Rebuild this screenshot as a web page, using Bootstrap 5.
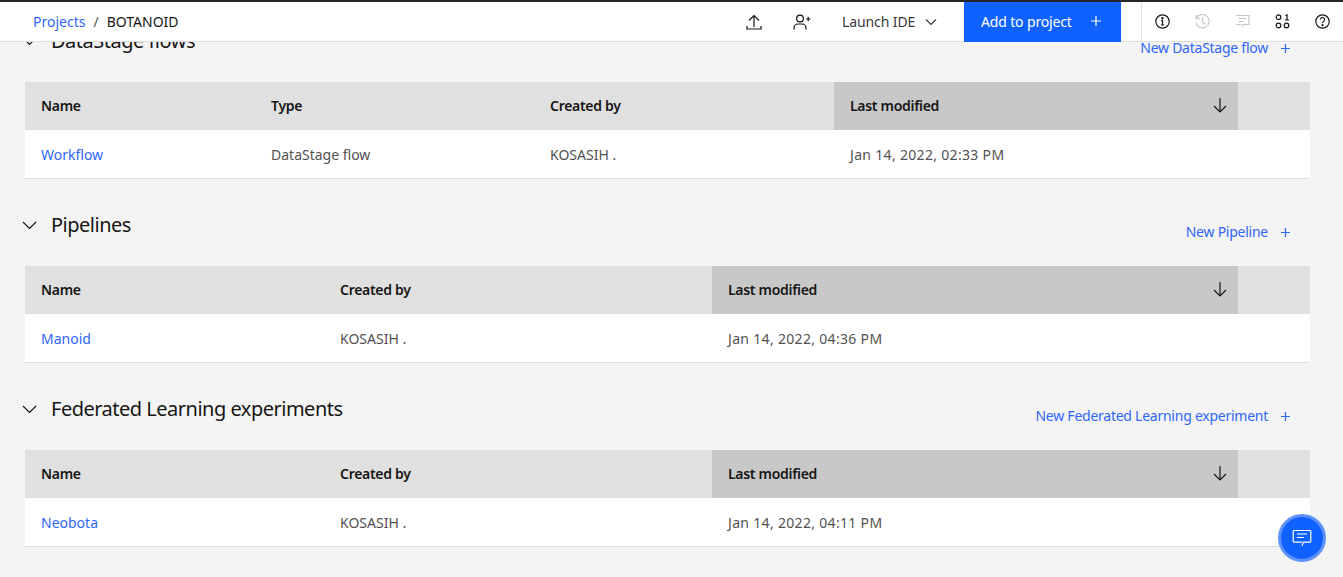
<!DOCTYPE html>
<html lang="en">
<head>
  <meta charset="UTF-8">
  <meta name="viewport" content="width=device-width, initial-scale=1">
  <title>BOTANOID</title>
  <link href="https://cdn.jsdelivr.net/npm/bootstrap@5.3.0/dist/css/bootstrap.min.css" rel="stylesheet">
  <style>
    html, body { height: 100%; overflow: hidden; }
    body { background: #f4f4f4; color: #161616; font-family: "Noto Sans", "Liberation Sans", sans-serif; font-size: 14px; }
    a { color: #2f66fb; text-decoration: none; }
    svg { display: block; fill: none; stroke: currentColor; stroke-width: 1.2; }

    .top-bar { height: 42px; background: #fff; border-top: 2px solid #262626; border-bottom: 1px solid #e0e0e0; }
    .crumbs { padding-left: 33px; line-height: 39px; }
    .crumbs .sep { margin: 0 8px; color: #525252; }
    .icon-btn { width: 48px; height: 39px; color: #161616; }
    .ide-btn { width: 130px; height: 39px; margin-left: 2px; color: #393939; gap: 10px; padding-left: 14px; letter-spacing: -.1px; }
    .add-btn { width: 157px; height: 40px; margin: 1px 0 0 6px; padding: 0 20px 2px 17px; background: #0f62fe; color: #fff; font-size: 14px; letter-spacing: -.15px; border: 0; border-radius: 0; }
    .side-icons { width: 202px; height: 39px; margin-left: 20px; border-left: 1px solid #e0e0e0; }
    .side-btn { width: 40px; height: 39px; color: #161616; }
    .side-btn.off { color: #c6c6c6; }

    .page-body { padding: 25px 33px 0 25px; }
    .sect { margin-bottom: 30.5px; }
    .sect-head { height: 32px; margin-bottom: 25px; }
    .sect-title { margin: 0 0 0 14px; font-size: 20px; font-weight: 400; line-height: 32px; letter-spacing: -.5px; color: #161616; }
    .toggle { margin-left: -3px; width: 15px; color: #161616; }
    .new-link { margin: 13px 20px 0 0; line-height: 20px; gap: 13px; letter-spacing: -.25px; }

    .data-tbl { table-layout: fixed; margin: 0; width: 1285px; }
    .data-tbl th, .data-tbl td { padding: 0 16px; vertical-align: middle; font-size: 14px; }
    .data-tbl th { height: 48px; padding-bottom: 2px; background: #e0e0e0; color: #161616; font-weight: 600; letter-spacing: -.3px; border: 0; }
    .data-tbl td { height: 48px; padding-top: 2px; background: #fff; color: #525252; border-bottom: 1px solid #e0e0e0; }
    .data-tbl th.sorted { background: #c8c8c8; }
    .data-tbl td.when { letter-spacing: .32px; }
    .data-tbl .sort-arrow { color: #161616; margin-right: -5px; }
    .w-name3 { width: 230px; } .w-type { width: 279px; } .w-by3 { width: 300px; }
    .w-name2 { width: 299px; } .w-by2 { width: 388px; }
    .w-mod3 { width: 404px; } .w-mod2 { width: 526px; } .w-end { width: 72px; }

    .chat-fab { position: fixed; right: 17px; bottom: 15px; width: 48px; height: 48px; border-radius: 50%; background: #0f62fe; border: 3px solid #6092fb; color: #fff; }
  </style>
</head>
<body>
  <header class="top-bar fixed-top d-flex align-items-center">
    <nav class="crumbs me-auto"><a href="#">Projects</a><span class="sep">/</span><span>BOTANOID</span></nav>
    <div class="icon-btn d-flex align-items-center justify-content-center">
      <svg width="16" height="16" viewBox="0 0 16 16"><path d="M8 13V1.500M3 6.500l5-5 5 5M1 12v3h14v-3"/></svg>
    </div>
    <div class="icon-btn d-flex align-items-center justify-content-center">
      <svg width="18" height="16" viewBox="0 0 18 16"><circle cx="7" cy="4.500" r="3.400"/><path d="M1 15.500v-1.500a4 4 0 0 1 4-4h4a4 4 0 0 1 4 4v1.500M13 5h4.500M15.200 2.700v4.600"/></svg>
    </div>
    <div class="ide-btn d-flex align-items-center">
      <span>Launch IDE</span>
      <svg width="12" height="8" viewBox="0 0 12 8"><path d="M1 1.500l5 5 5-5"/></svg>
    </div>
    <button class="add-btn btn d-flex align-items-center justify-content-between">
      <span>Add to project</span>
      <svg width="10" height="10" viewBox="0 0 10 10"><path d="M5 0v10M0 5h10"/></svg>
    </button>
    <div class="side-icons d-flex align-items-center">
      <div class="side-btn d-flex align-items-center justify-content-center">
        <svg width="15" height="15" viewBox="0 0 15 15"><circle cx="7.500" cy="7.500" r="6.700"/><path d="M5.800 11h3.400M7.500 11V6.600H6.200"/><circle cx="7.400" cy="4.200" r=".6" fill="currentColor"/></svg>
      </div>
      <div class="side-btn off d-flex align-items-center justify-content-center">
        <svg width="15" height="15" viewBox="0 0 15 15"><path d="M1.200 1v3.600h3.600M1.400 4.400A6.700 6.700 0 1 1 .9 8.500M7.500 3.600v4.200l2.600 2.400"/></svg>
      </div>
      <div class="side-btn off d-flex align-items-center justify-content-center">
        <svg width="15" height="15" viewBox="0 0 15 15"><path d="M1 1.500h13v9H8.500l-1.400 2.800M7.100 10.500H1zM3.500 4.500h8M3.500 7.500h5"/></svg>
      </div>
      <div class="side-btn d-flex align-items-center justify-content-center">
        <svg width="15" height="15" viewBox="0 0 15 15"><circle cx="3.500" cy="3.200" r="2.300"/><path d="M10.500 1.600l1.500-.7v5M10 6h4"/><circle cx="3.500" cy="11.500" r="2.300"/><circle cx="11.500" cy="11.500" r="2.300"/></svg>
      </div>
      <div class="side-btn d-flex align-items-center justify-content-center">
        <svg width="15" height="15" viewBox="0 0 15 15"><circle cx="7.500" cy="7.500" r="6.700"/><path d="M5.400 5.600a2.100 2.100 0 1 1 3.200 1.800c-.7.400-1.100.8-1.100 1.700"/><circle cx="7.500" cy="11.200" r=".5" fill="currentColor"/></svg>
      </div>
    </div>
  </header>

  <main class="page-body">
    <section class="sect">
      <div class="sect-head d-flex align-items-start justify-content-between">
        <div class="d-flex align-items-center">
          <svg class="toggle" width="15" height="9" viewBox="0 0 15 9"><path d="M1 1l6.500 6.500L14 1"/></svg>
          <h2 class="sect-title">DataStage flows</h2>
        </div>
        <a class="new-link d-flex align-items-center" href="#">New DataStage flow <svg width="9" height="9" viewBox="0 0 9 9"><path d="M4.500 0v9M0 4.500h9"/></svg></a>
      </div>
      <table class="table data-tbl">
        <thead><tr>
          <th class="w-name3">Name</th><th class="w-type">Type</th><th class="w-by3">Created by</th>
          <th class="w-mod3 sorted"><div class="d-flex align-items-center justify-content-between">Last modified <svg class="sort-arrow" width="14" height="15" viewBox="0 0 14 15"><path d="M7 0v14M1 8l6 6 6-6"/></svg></div></th>
          <th class="w-end"></th>
        </tr></thead>
        <tbody><tr><td><a href="#">Workflow</a></td><td>DataStage flow</td><td>KOSASIH .</td><td class="when">Jan 14, 2022, 02:33 PM</td><td></td></tr></tbody>
      </table>
    </section>

    <section class="sect">
      <div class="sect-head d-flex align-items-start justify-content-between">
        <div class="d-flex align-items-center">
          <svg class="toggle" width="15" height="9" viewBox="0 0 15 9"><path d="M1 1l6.500 6.500L14 1"/></svg>
          <h2 class="sect-title">Pipelines</h2>
        </div>
        <a class="new-link d-flex align-items-center" href="#">New Pipeline <svg width="9" height="9" viewBox="0 0 9 9"><path d="M4.500 0v9M0 4.500h9"/></svg></a>
      </div>
      <table class="table data-tbl">
        <thead><tr>
          <th class="w-name2">Name</th><th class="w-by2">Created by</th>
          <th class="w-mod2 sorted"><div class="d-flex align-items-center justify-content-between">Last modified <svg class="sort-arrow" width="14" height="15" viewBox="0 0 14 15"><path d="M7 0v14M1 8l6 6 6-6"/></svg></div></th>
          <th class="w-end"></th>
        </tr></thead>
        <tbody><tr><td><a href="#">Manoid</a></td><td>KOSASIH .</td><td class="when">Jan 14, 2022, 04:36 PM</td><td></td></tr></tbody>
      </table>
    </section>

    <section class="sect">
      <div class="sect-head d-flex align-items-start justify-content-between">
        <div class="d-flex align-items-center">
          <svg class="toggle" width="15" height="9" viewBox="0 0 15 9"><path d="M1 1l6.500 6.500L14 1"/></svg>
          <h2 class="sect-title">Federated Learning experiments</h2>
        </div>
        <a class="new-link d-flex align-items-center" href="#">New Federated Learning experiment <svg width="9" height="9" viewBox="0 0 9 9"><path d="M4.500 0v9M0 4.500h9"/></svg></a>
      </div>
      <table class="table data-tbl">
        <thead><tr>
          <th class="w-name2">Name</th><th class="w-by2">Created by</th>
          <th class="w-mod2 sorted"><div class="d-flex align-items-center justify-content-between">Last modified <svg class="sort-arrow" width="14" height="15" viewBox="0 0 14 15"><path d="M7 0v14M1 8l6 6 6-6"/></svg></div></th>
          <th class="w-end"></th>
        </tr></thead>
        <tbody><tr><td><a href="#">Neobota</a></td><td>KOSASIH .</td><td class="when">Jan 14, 2022, 04:11 PM</td><td></td></tr></tbody>
      </table>
    </section>
  </main>

  <div class="chat-fab d-flex align-items-center justify-content-center">
    <svg width="20" height="20" viewBox="0 0 20 20"><path d="M2 2.500h16a.8.8 0 0 1 .8.8v10a.8.8 0 0 1-.8.8h-6.500L10 17.800M10 14.100H2a.8.8 0 0 1-.8-.8v-10a.8.8 0 0 1 .8-.8M5 6h10M5 9.500h7"/></svg>
  </div>
  <script src="https://cdn.jsdelivr.net/npm/bootstrap@5.3.0/dist/js/bootstrap.bundle.min.js"></script>
</body>
</html>
